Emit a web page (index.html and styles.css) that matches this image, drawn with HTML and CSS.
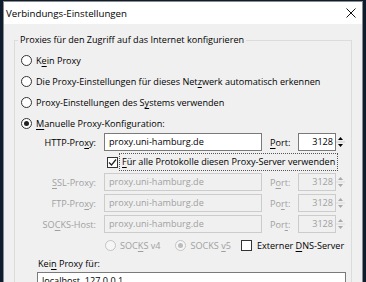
FILE: index.html
```html
<!doctype html>
<html lang="de">
<head>
    <meta charset="UTF-8">
    <title>Verbindungs-Einstellungen</title>
    <link rel="stylesheet" href="styles.css">
</head>
<body>
  <div class="dialog">
    <div class="titlebar">
      <span class="title">Verbindungs-Einstellungen</span>
      <svg class="close" width="10" height="10" viewBox="0 0 10 10"><path d="M0.5 0.5L9.5 9.5M9.5 0.5L0.5 9.5" stroke="#111" stroke-width="1"/></svg>
    </div>
    <div class="content">
      <fieldset class="group">
        <legend>Proxies für den Zugriff auf das Internet konfigurieren</legend>
        <div class="radios">
          <div class="radio-row"><span class="radio"></span><span>K<u>e</u>in Proxy</span></div>
          <div class="radio-row"><span class="radio"></span><span>Die Proxy-Einstellungen für dieses Net<u>z</u>werk automatisch erkennen</span></div>
          <div class="radio-row"><span class="radio"></span><span>Proxy-Einstellungen des S<u>y</u>stems verwenden</span></div>
          <div class="radio-row"><span class="radio checked"></span><span><u>M</u>anuelle Proxy-Konfiguration:</span></div>
        </div>

        <div class="proxy-row first">
          <span class="field-label">HTTP-Pro<u>x</u>y:</span>
          <div class="input">proxy.uni-hamburg.de</div>
          <span class="port-label"><u>P</u>ort:</span>
          <div class="input port">3128</div>
          <div class="spin">
            <svg width="9" height="18" viewBox="0 0 9 18"><path d="M2 7L4.5 4L7 7Z" fill="#000"/><path d="M2 11L4.5 14L7 11Z" fill="#000"/><path d="M0 9H9" stroke="#cfcfcf"/></svg>
          </div>
        </div>
        <div class="share-row">
          <span class="checkbox">
            <svg width="11" height="11" viewBox="0 0 11 11"><path d="M2 5.5L4.5 8L9 2.5" fill="none" stroke="#222" stroke-width="1.2"/></svg>
          </span>
          <span class="focus-label"><u>F</u>ür alle Protokolle diesen Proxy-Server verwenden</span>
        </div>
        <div class="proxy-row disabled">
          <span class="field-label"><u>S</u>SL-Proxy:</span>
          <div class="input">proxy.uni-hamburg.de</div>
          <span class="port-label">P<u>o</u>rt:</span>
          <div class="input port">3128</div>
          <div class="spin">
            <svg width="9" height="18" viewBox="0 0 9 18"><path d="M2 7L4.5 4L7 7Z" fill="#a8a8a8"/><path d="M2 11L4.5 14L7 11Z" fill="#a8a8a8"/><path d="M0 9H9" stroke="#dcdcdc"/></svg>
          </div>
        </div>
        <div class="proxy-row disabled">
          <span class="field-label">FTP-Pro<u>x</u>y:</span>
          <div class="input">proxy.uni-hamburg.de</div>
          <span class="port-label">Po<u>r</u>t:</span>
          <div class="input port">3128</div>
          <div class="spin">
            <svg width="9" height="18" viewBox="0 0 9 18"><path d="M2 7L4.5 4L7 7Z" fill="#a8a8a8"/><path d="M2 11L4.5 14L7 11Z" fill="#a8a8a8"/><path d="M0 9H9" stroke="#dcdcdc"/></svg>
          </div>
        </div>
        <div class="proxy-row disabled">
          <span class="field-label">SO<u>C</u>KS-Host:</span>
          <div class="input">proxy.uni-hamburg.de</div>
          <span class="port-label">Por<u>t</u>:</span>
          <div class="input port">3128</div>
          <div class="spin">
            <svg width="9" height="18" viewBox="0 0 9 18"><path d="M2 7L4.5 4L7 7Z" fill="#a8a8a8"/><path d="M2 11L4.5 14L7 11Z" fill="#a8a8a8"/><path d="M0 9H9" stroke="#dcdcdc"/></svg>
          </div>
        </div>

        <div class="socks-row">
          <span class="radio disabled"></span><span class="gray">SOC<u>K</u>S v4</span>
          <span class="radio disabled checked second"></span><span class="gray">SOCKS <u>v</u>5</span>
          <span class="checkbox third"></span><span>Externer <u>D</u>NS-Server</span>
        </div>

        <div class="noproxy-label">Kei<u>n</u> Proxy für:</div>
        <div class="textarea">localhost, 127.0.0.1</div>
      </fieldset>
    </div>
  </div>
</body>
</html>
```

FILE: styles.css
```css
body {
  margin: 0;
  background-color: #0e1c30;
  font-family: "Open Sans", "Noto Sans", sans-serif;
  font-size: 9.1px;
  color: #000;
  overflow: hidden;
  white-space: nowrap;
}
u {
  text-decoration-thickness: 1px;
  text-underline-offset: 2px;
}
.dialog {
  margin: 1px 0 0 3px;
  width: 358px;
  height: 300px;
  border: 1px solid #8a8a8a;
  background-color: #f0f0f0;
}
.titlebar {
  height: 22px;
  background-color: #fff;
  display: flex;
  align-items: center;
  justify-content: space-between;
  padding: 0 6px 0 2px;
}
.title {
  font-size: 9.7px;
}
.close {
  display: block;
}
.content {
  padding: 8px 10px 0 10px;
}
.group {
  margin: 0;
  height: 280px;
  border: 1px solid #dcdcdc;
  padding: 0 6px;
  min-width: 0;
}
.group legend {
  margin-left: -3px;
  padding: 0 2px;
  line-height: 16px;
}
.radios {
  padding-top: 2px;
}
.radio-row {
  height: 21px;
  display: flex;
  align-items: center;
}
.radio-row:last-child {
  height: 20px;
}
.radio {
  width: 11px;
  height: 11px;
  box-sizing: border-box;
  border: 1px solid #333;
  border-radius: 50%;
  background-color: #fff;
  margin-right: 4px;
  position: relative;
  flex: none;
}
.radio.checked::after {
  content: "";
  position: absolute;
  left: 2px;
  top: 2px;
  width: 5px;
  height: 5px;
  border-radius: 50%;
  background-color: #222;
}
.radio.disabled {
  border-color: #c4c4c4;
  background-color: #f6f6f6;
}
.radio.disabled.checked::after {
  background-color: #bcbcbc;
}

.proxy-row {
  height: 18px;
  display: flex;
  align-items: center;
  margin-bottom: 3px;
}
.proxy-row.first {
  margin-bottom: 1px;
}
.field-label {
  width: 75px;
  margin-right: 8px;
  text-align: right;
}
.input {
  width: 158px;
  height: 18px;
  box-sizing: border-box;
  border: 1px solid #7a7a7a;
  background-color: #fff;
  padding: 0 4px;
  line-height: 16px;
  overflow: hidden;
}
.port-label {
  width: 22px;
  margin-left: 8px;
  margin-right: 6px;
}
.input.port {
  width: 38px;
  text-align: right;
  padding: 0 2px 0 0;
}
.spin {
  width: 9px;
  height: 18px;
}
.spin svg {
  display: block;
}
.disabled .field-label,
.disabled .port-label,
.disabled .input,
.gray {
  color: #a0a0a0;
}
.disabled .input {
  border-color: #cccccc;
  background-color: #f0f0f0;
}

.share-row {
  height: 20px;
  display: flex;
  align-items: center;
  padding-left: 86px;
  margin-bottom: 1px;
}
.checkbox {
  width: 11px;
  height: 11px;
  box-sizing: border-box;
  border: 1px solid #333;
  background-color: #fff;
  flex: none;
}
.checkbox svg {
  display: block;
  margin: -1px;
}
.focus-label {
  margin-left: 1px;
  padding: 0 2px;
  height: 18px;
  line-height: 16px;
  border: 1px dotted #555;
  box-sizing: border-box;
}

.socks-row {
  height: 18px;
  display: flex;
  align-items: center;
  padding-left: 84px;
}
.socks-row .second {
  margin-left: 15px;
}
.socks-row .third {
  margin-left: 10px;
  margin-right: 5px;
}

.noproxy-label {
  margin-top: 2px;
  padding-left: 17px;
  height: 16px;
  line-height: 16px;
}
.textarea {
  margin-left: 16px;
  width: 309px;
  height: 30px;
  box-sizing: border-box;
  border: 1px solid #7a7a7a;
  background-color: #fff;
  padding: 1px 4px;
}
```
